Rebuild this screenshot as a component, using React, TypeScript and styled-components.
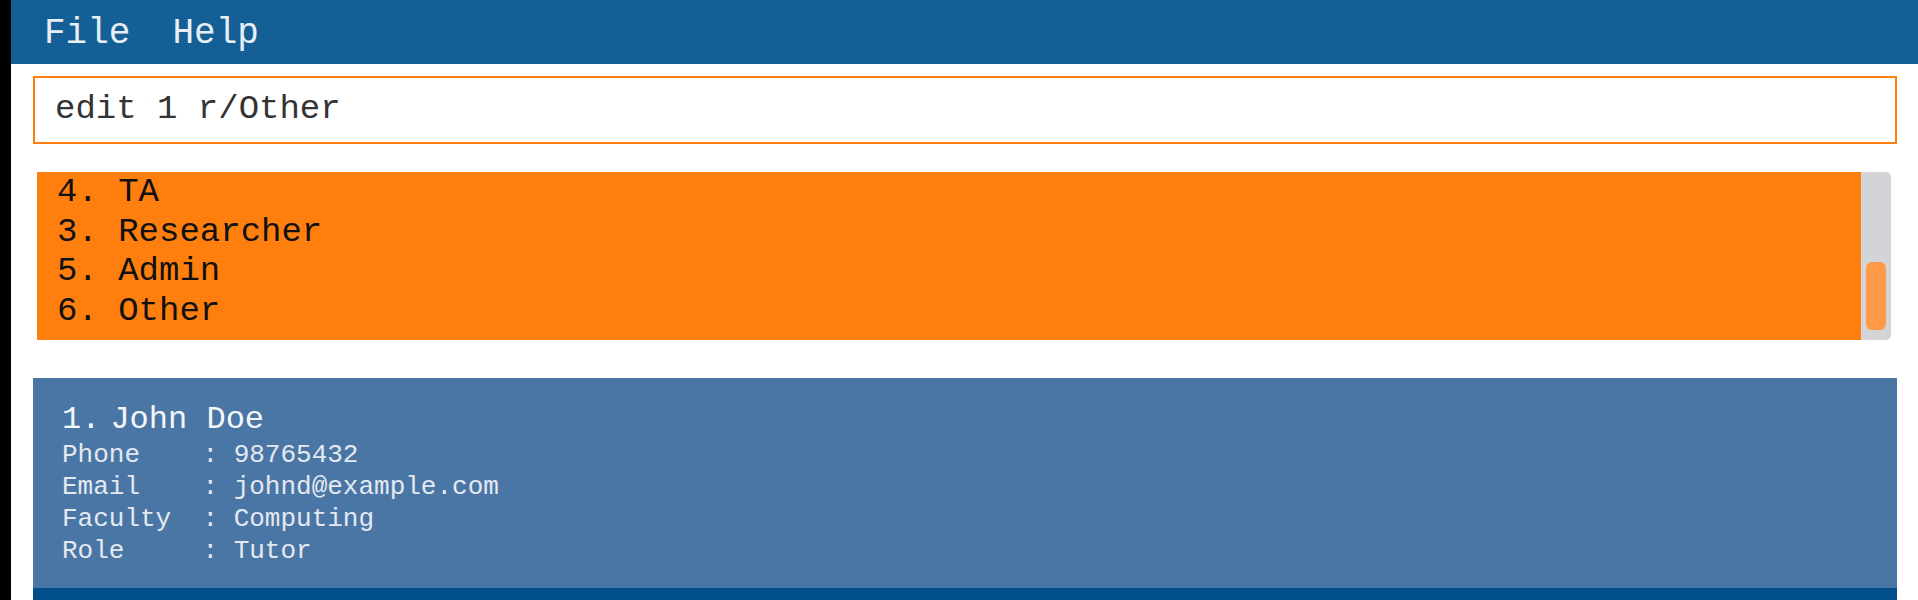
import React from "react";
import styled, { createGlobalStyle } from "styled-components";

const GlobalStyle = createGlobalStyle`
  html, body {
    margin: 0;
    padding: 0;
    background: #ffffff;
    overflow: hidden;
  }
  #root {
    height: 600px;
  }
`;

const MONO = `"Liberation Mono", "Courier New", monospace`;

const Window = styled.div`
  display: flex;
  width: 1918px;
  height: 600px;
  overflow: hidden;
  background: #ffffff;
  font-family: ${MONO};
`;

const EdgeStrip = styled.div`
  width: 11px;
  flex: none;
  background: #000000;
`;

const Main = styled.div`
  flex: 1;
  min-width: 0;
  display: flex;
  flex-direction: column;
`;

const MenuBar = styled.nav`
  height: 64px;
  flex: none;
  display: flex;
  align-items: flex-start;
  padding-left: 12px;
  box-sizing: border-box;
  background: #135f96;
`;

const MenuItem = styled.span`
  padding: 4px 21px 0;
  font-size: 36px;
  line-height: 60px;
  color: #e8eef4;
`;

const CommandBox = styled.div`
  flex: none;
  margin: 12px 21px 0 22px;
  height: 68px;
  box-sizing: border-box;
  border: 2px solid #ff7f0e;
  background: #ffffff;
  padding: 1px 0 0 20px;
  font-size: 34px;
  line-height: 60px;
  color: #333333;
  white-space: pre;
`;

const ResultPane = styled.div`
  flex: none;
  margin: 28px 27px 0 26px;
  height: 168px;
  display: flex;
`;

const ResultText = styled.div`
  flex: 1;
  background: #ff7f0e;
  padding: 1px 0 0 20px;
  font-size: 34px;
  line-height: 39.7px;
  color: #111111;
  white-space: pre;
  overflow: hidden;
`;

const ScrollTrack = styled.div`
  width: 30px;
  flex: none;
  box-sizing: border-box;
  padding-bottom: 10px;
  background: #d3d4d8;
  border-radius: 0 5px 5px 0;
  display: flex;
  flex-direction: column;
  justify-content: flex-end;
  align-items: center;
`;

const ScrollThumb = styled.div`
  width: 20px;
  height: 68px;
  border-radius: 6px;
  background: #ff9a48;
`;

const PersonList = styled.div`
  flex: none;
  margin: 38px 21px 0 22px;
  display: flex;
  flex-direction: column;
`;

const PersonCard = styled.div<{ $bg: string }>`
  height: 210px;
  box-sizing: border-box;
  padding: 23px 0 21px 29px;
  background: ${(p) => p.$bg};
  color: #eef2f7;
`;

const NameLine = styled.div`
  display: flex;
  font-size: 32px;
  line-height: 38px;
  color: #f4f6f9;
  white-space: pre;
`;

const Index = styled.span`
  margin-right: 10px;
`;

const DetailRow = styled.div`
  display: flex;
  font-size: 26px;
  line-height: 32px;
  color: #e4e9f0;
  white-space: pre;
`;

const Label = styled.span`
  width: 9ch;
  flex: none;
`;

const roles = ["4. TA", "3. Researcher", "5. Admin", "6. Other"];

const details: [string, string][] = [
  ["Phone", "98765432"],
  ["Email", "johnd@example.com"],
  ["Faculty", "Computing"],
  ["Role", "Tutor"],
];

export default function App() {
  return (
    <>
      <GlobalStyle />
      <Window>
        <EdgeStrip />
        <Main>
          <MenuBar>
            <MenuItem>File</MenuItem>
            <MenuItem>Help</MenuItem>
          </MenuBar>
          <CommandBox>edit 1 r/Other</CommandBox>
          <ResultPane>
            <ResultText>
              {roles.map((r) => (
                <div key={r}>{r}</div>
              ))}
            </ResultText>
            <ScrollTrack>
              <ScrollThumb />
            </ScrollTrack>
          </ResultPane>
          <PersonList>
            <PersonCard $bg="#4a76a6">
              <NameLine>
                <Index>1.</Index>
                <span>John Doe</span>
              </NameLine>
              {details.map(([k, v]) => (
                <DetailRow key={k}>
                  <Label>{k}</Label>
                  <span>: {v}</span>
                </DetailRow>
              ))}
            </PersonCard>
            <PersonCard $bg="#004f8a" />
          </PersonList>
        </Main>
      </Window>
    </>
  );
}
